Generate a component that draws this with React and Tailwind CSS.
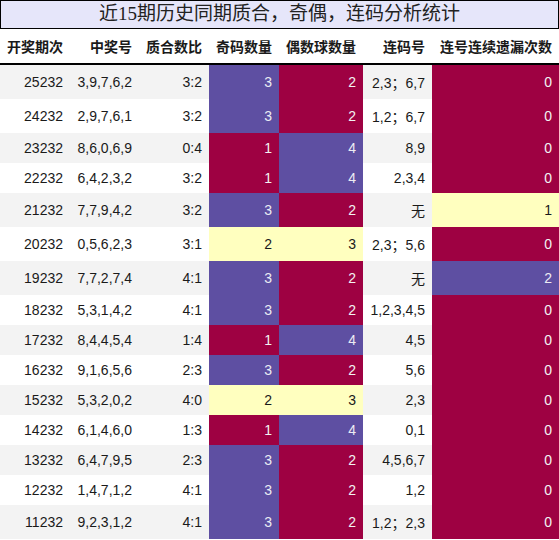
const rows = [
  ["25232", "3,9,7,6,2", "3:2", 3, 2, "2,3；6,7", 0],
  ["24232", "2,9,7,6,1", "3:2", 3, 2, "1,2；6,7", 0],
  ["23232", "8,6,0,6,9", "0:4", 1, 4, "8,9", 0],
  ["22232", "6,4,2,3,2", "3:2", 1, 4, "2,3,4", 0],
  ["21232", "7,7,9,4,2", "3:2", 3, 2, "无", 1],
  ["20232", "0,5,6,2,3", "3:1", 2, 3, "2,3；5,6", 0],
  ["19232", "7,7,2,7,4", "4:1", 3, 2, "无", 2],
  ["18232", "5,3,1,4,2", "4:1", 3, 2, "1,2,3,4,5", 0],
  ["17232", "8,4,4,5,4", "1:4", 1, 4, "4,5", 0],
  ["16232", "9,1,6,5,6", "2:3", 3, 2, "5,6", 0],
  ["15232", "5,3,2,0,2", "4:0", 2, 3, "2,3", 0],
  ["14232", "6,1,4,6,0", "1:3", 1, 4, "0,1", 0],
  ["13232", "6,4,7,9,5", "2:3", 3, 2, "4,5,6,7", 0],
  ["12232", "1,4,7,1,2", "4:1", 3, 2, "1,2", 0],
  ["11232", "9,2,3,1,2", "4:1", 3, 2, "1,2；2,3", 0],
];

const heads = ["开奖期次", "中奖号", "质合数比", "奇码数量", "偶数球数量", "连码号", "连号连续遗漏次数"];
const widths = [70, 69, 70, 70, 84, 69, 127];

// low -> crimson, middle -> pale yellow, high -> purple
const LOW = "bg-[#9e0142] text-[#f2f2f2]";
const MID = "bg-[#ffffbf] text-[#1a1a1a]";
const HIGH = "bg-[#5e4fa2] text-[#ececf4]";

function scale(v, min) {
  if (v === min) return LOW;
  if (v === min + 1) return MID;
  return HIGH;
}

export default function App() {
  return (
    <div className="w-[559px] bg-white" style={{ fontFamily: '"Liberation Sans", "Noto Sans CJK SC", sans-serif' }}>
      <div
        className="h-[29px] border border-black bg-[#e6e6fa] text-center text-[19px] leading-[26px] text-[#222]"
        style={{ fontFamily: '"Liberation Serif", "Noto Sans CJK SC", serif' }}
      >
        近15期历史同期质合，奇偶，连码分析统计
      </div>
      <table className="w-[559px] table-fixed border-collapse text-[14px] leading-[normal] text-[#1a1a1a]">
        <colgroup>
          {widths.map((w, i) => (
            <col key={i} style={{ width: w }} />
          ))}
        </colgroup>
        <thead>
          <tr>
            {heads.map((h) => (
              <th key={h} className="h-[35px] border-b-2 border-black pr-[7px] text-right font-bold whitespace-nowrap">
                {h}
              </th>
            ))}
          </tr>
        </thead>
        <tbody>
          {rows.map((r, i) => {
            const bg = i % 2 === 0 ? "bg-[#f3f3f3]" : "bg-white";
            return (
              <tr key={r[0]} className={bg}>
                <td className="py-[7px] pr-[7px] text-right">{r[0]}</td>
                <td className="py-[7px] pr-[7px] text-right">{r[1]}</td>
                <td className="py-[7px] pr-[7px] text-right">{r[2]}</td>
                <td className={"py-[7px] pr-[7px] text-right " + scale(r[3], 1)}>{r[3]}</td>
                <td className={"py-[7px] pr-[7px] text-right " + scale(r[4], 2)}>{r[4]}</td>
                <td className="py-[7px] pr-[7px] text-right whitespace-nowrap">{r[5]}</td>
                <td className={"py-[7px] pr-[7px] text-right " + scale(r[6], 0)}>{r[6]}</td>
              </tr>
            );
          })}
        </tbody>
      </table>
    </div>
  );
}
